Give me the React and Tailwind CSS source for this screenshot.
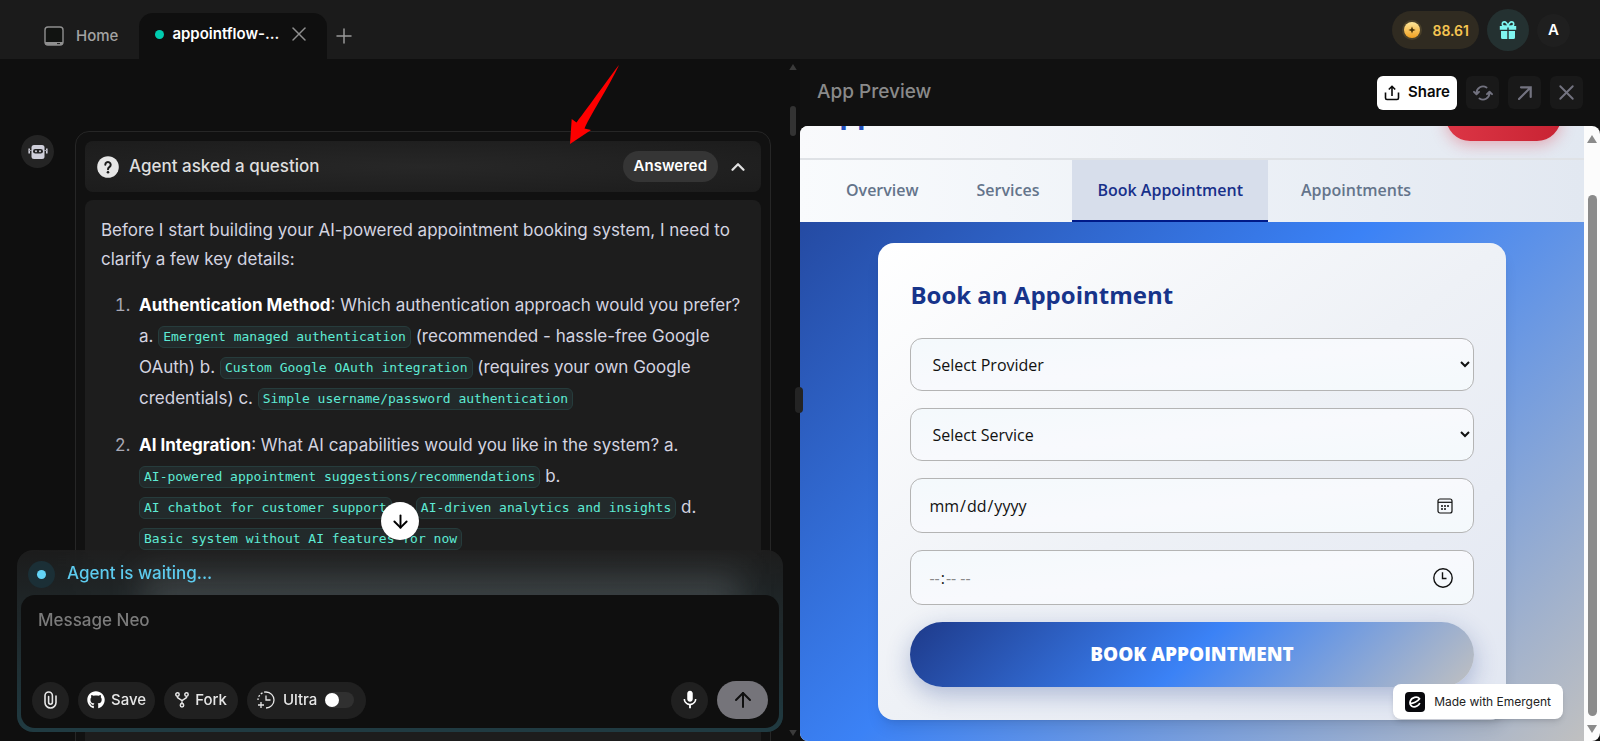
import React from 'react';
import { ArrowUp, ArrowDown, ChevronUp, Plus, X } from 'lucide-react';
import { FaGithub } from 'react-icons/fa';
import { MdMic } from 'react-icons/md';

const questions = [
  {
    title: 'Authentication Method',
    text: ': Which authentication approach would you prefer? a. ',
    options: [
      { label: 'Emergent managed authentication', after: ' (recommended - hassle-free Google OAuth) b. ' },
      { label: 'Custom Google OAuth integration', after: ' (requires your own Google credentials) c. ' },
      { label: 'Simple username/password authentication', after: '' },
    ],
  },
  {
    title: 'AI Integration',
    text: ': What AI capabilities would you like in the system? a. ',
    options: [
      { label: 'AI-powered appointment suggestions/recommendations', after: ' b. ' },
      { label: 'AI chatbot for customer support', after: ' c. ' },
      { label: 'AI-driven analytics and insights', after: ' d. ' },
      { label: 'Basic system without AI features for now', after: '' },
    ],
  },
];

const navTabs = ['Overview', 'Services', 'Book Appointment', 'Appointments'];

const HomeIcon = () => (
  <svg width="20" height="20" viewBox="0 0 20 20" fill="none">
    <rect x="1" y="1" width="18" height="18" rx="3" fill="#111311" stroke="#8f8f8f" strokeWidth="1.4" />
    <path d="M1 16h18v.5a2.5 2.5 0 0 1-2.500 2.500h-13A2.500 2.500 0 0 1 1 16.500z" fill="#8f8f8f" />
    <path d="M13 17.600h3" stroke="#1b1b1b" strokeWidth="1" />
  </svg>
);

const RobotIcon = () => (
  <svg width="20" height="14" viewBox="0 0 20 14">
    <rect x="3.500" y="0" width="13" height="14" rx="2.500" fill="#cfcfda" />
    <path d="M1.200 3.500v5M18.800 3.500v5" stroke="#cfcfda" strokeWidth="1.600" />
    <path d="M1 5.500h3M16 5.500h3" stroke="#9b9ba5" strokeWidth="1" />
    <rect x="5" y="4" width="10" height="4.600" rx="2.300" fill="#242424" />
    <circle cx="8" cy="6.300" r="1" fill="#cfcfda" />
    <circle cx="12" cy="6.300" r="1" fill="#cfcfda" />
  </svg>
);

const QuestionIcon = () => (
  <svg width="22" height="22" viewBox="0 0 22 22" fill="none">
    <circle cx="11" cy="11" r="10.800" fill="#e6e6e6" />
    <path d="M8.300 8.700a2.700 2.700 0 1 1 4.300 2.200c-1 .7-1.600 1.100-1.600 2.300" stroke="#1c1c1c" strokeWidth="2" strokeLinecap="round" />
    <circle cx="11" cy="16.200" r="1.300" fill="#1c1c1c" />
  </svg>
);

const CoinIcon = () => (
  <svg width="20" height="20" viewBox="0 0 20 20">
    <defs>
      <linearGradient id="coin" x1="0" y1="0" x2="0" y2="1">
        <stop offset="0" stopColor="#ffe79a" />
        <stop offset="1" stopColor="#f0a020" />
      </linearGradient>
    </defs>
    <circle cx="10" cy="10" r="10" fill="#4a4029" />
    <circle cx="10" cy="10" r="8" fill="url(#coin)" />
    <path d="M10 6.400 11 9l2.600 1-2.600 1-1 2.600L9 11l-2.600-1L9 9z" fill="#4a3408" />
  </svg>
);

const GiftIcon = () => (
  <svg width="18" height="18" viewBox="0 0 18 18" fill="none">
    <path d="M9 5.200C8 2 6.900.9 5.400.9a2.100 2.100 0 0 0 0 4.200zM9 5.200C10 2 11.100.9 12.600.9a2.100 2.100 0 0 1 0 4.200z" stroke="#7ff5f0" strokeWidth="1.600" />
    <path d="M.8 5h16.400v3.800H9.700V6.500H8.300v2.300H.8zM2 9.900h6.300V18H3.500A1.500 1.500 0 0 1 2 16.500zM9.700 9.900H16v6.600a1.500 1.500 0 0 1-1.500 1.500H9.700z" fill="#7ff5f0" />
  </svg>
);

const ShareIcon = () => (
  <svg width="16" height="16" viewBox="0 0 16 16" fill="none" stroke="#0a0a0a" strokeWidth="1.600">
    <path d="M1.500 7.500V13a1.500 1.500 0 0 0 1.500 1.500h10a1.500 1.500 0 0 0 1.500-1.500V7.500" />
    <path d="M8 11V1.500M4.800 4.500 8 1.300l3.200 3.200" />
  </svg>
);

const RefreshIcon = () => (
  <svg width="20" height="16" viewBox="0 0 20 16" fill="none" stroke="#737380" strokeWidth="1.900" strokeLinecap="round" strokeLinejoin="round">
    <path d="M3.500 9V8A6.500 6.500 0 0 1 13.500 2.500M1 6.800 3.500 9.300 6 6.800" />
    <path d="M16.500 7V8A6.500 6.500 0 0 1 6.500 13.500M14 9.200 16.500 6.700 19 9.200" />
  </svg>
);

const OpenIcon = () => (
  <svg width="14" height="14" viewBox="0 0 14 14" fill="none" stroke="#737380" strokeWidth="2.200" strokeLinecap="round">
    <path d="M1 13 12.500 1.500M3 1.300h9.700V11" />
  </svg>
);

const ClipIcon = () => (
  <svg width="13" height="18" viewBox="0 0 13 18" fill="none" stroke="#e6e6e6" strokeWidth="1.600" strokeLinecap="round">
    <path d="M12 5v6.500a5.500 5.500 0 0 1-11 0V4.700a3.700 3.700 0 0 1 7.400 0v6.600a1.900 1.900 0 0 1-3.800 0V5.500" />
  </svg>
);

const ForkIcon = () => (
  <svg width="14" height="16" viewBox="0 0 14 16" fill="none" stroke="#e6e6e6" strokeWidth="1.500">
    <circle cx="2.500" cy="2.500" r="1.700" />
    <circle cx="11.500" cy="2.500" r="1.700" />
    <circle cx="7" cy="13.300" r="1.700" />
    <path d="M2.500 4.200V5.500L7 8.500l4.500-3V4.200M7 8.500v3" />
  </svg>
);

const UltraIcon = () => (
  <svg width="18" height="18" viewBox="0 0 18 18" fill="none" stroke="#e6e6e6" strokeWidth="1.300">
    <path d="M9 1a8 8 0 0 1 0 16" />
    <path d="M9 1a8 8 0 0 0-8 8" strokeDasharray="2 1.600" />
    <path d="M9 4.500V9h4.500M4 11v6M1 14h6" />
  </svg>
);

const CalendarIcon = () => (
  <svg width="16" height="16" viewBox="0 0 16 16" fill="none">
    <rect x="1" y="1" width="14" height="14" rx="2" stroke="#111" strokeWidth="1.200" />
    <path d="M1 4.300h14" stroke="#111" strokeWidth="1.200" />
    <path d="M4 8h2M7 8h2M10 8h2M4 11h2M7 11h2" stroke="#111" strokeWidth="1.600" />
  </svg>
);

const ClockIcon = () => (
  <svg width="20" height="20" viewBox="0 0 20 20" fill="none" stroke="#111" strokeWidth="1.400">
    <circle cx="10" cy="10" r="9.200" />
    <path d="M9.500 4.200V10.500H13.500" />
  </svg>
);

const EmergentLogo = () => (
  <svg width="20" height="20" viewBox="0 0 20 20" fill="none">
    <rect width="20" height="20" rx="4" fill="#08080c" />
    <path d="M5 11.500C8 11.600 12.500 9.800 14.500 6.800 12.500 3.800 6.500 5 5.200 9.300 4 14 8.500 16 12 14c1.500-.8 2.400-1.800 2.800-3" stroke="#fff" strokeWidth="1.700" />
  </svg>
);

const Caret = ({ down, small }) => (
  <svg width={small ? 8 : 10} height={small ? 6 : 8} viewBox="0 0 10 8" className={small ? 'text-[#3a3a3a]' : 'text-[#8b8b8b]'}>
    <path d={down ? 'M0 0h10L5 8z' : 'M0 8h10L5 0z'} fill="currentColor" />
  </svg>
);

const TopBar = () => (
  <header className="flex h-[59px] shrink-0 items-end justify-between bg-[#1b1b1b] pr-[30px]">
    <div className="flex h-[46px] items-stretch">
      <button className="flex items-center gap-3 pr-[21px] pl-11 text-[15px] font-medium text-[#a3a3a3]">
        <HomeIcon />
        Home
      </button>
      <div className="flex w-[188px] items-center gap-2 rounded-t-[14px] bg-[#0f0f0f] pr-[18px] pb-1 pl-4">
        <span className="size-[9px] shrink-0 rounded-full bg-[#00ccaf]" />
        <span className="grow text-[15px] font-semibold text-white">appointflow-...</span>
        <button aria-label="Close tab"><X size={24} strokeWidth={1.5} className="text-[#8f8f8f]" /></button>
      </div>
      <button aria-label="New tab" className="px-[5px]"><Plus size={24} strokeWidth={1.5} className="text-[#999]" /></button>
    </div>
    <div className="mb-2 flex items-center gap-2">
      <button className="flex h-[38px] items-center gap-[10px] rounded-full bg-[#302b21] px-[10px] text-[14px] font-semibold text-[#f5c451]">
        <CoinIcon />
        88.61
      </button>
      <button aria-label="Rewards" className="flex size-[42px] items-center justify-center rounded-full bg-[#243131]"><GiftIcon /></button>
      <button className="size-[33px] rounded-full bg-[#1f1f1f] text-[15px] font-semibold text-white">A</button>
    </div>
  </header>
);

const Question = ({ title, text, options }) => (
  <li className="mt-4 pl-1 marker:text-[#a9a9b5]">
    <strong className="font-bold text-white">{title}</strong>{text}
    {options.map(opt => (
      <React.Fragment key={opt.label}>
        <code className="inline-block h-[22px] rounded-md border border-[#263c3c] bg-[#222a2b] px-1 align-middle font-['DejaVu_Sans_Mono',monospace] text-[13px] leading-[20px] text-[#5eead4]">{opt.label}</code>{opt.after}
      </React.Fragment>
    ))}
  </li>
);

const Composer = () => (
  <div className="absolute inset-x-[17px] bottom-[9px] overflow-hidden rounded-2xl bg-linear-to-b from-[#202020]/80 to-[#203b42] px-1 pb-1 backdrop-blur-md">
    {/* light bleeding through from the content behind */}
    <div className="absolute top-6 right-11 left-32 h-12 bg-[#8a9299]/25 blur-lg" />
    <div className="relative flex h-[45px] items-center gap-3 pt-[3px] pl-[7px] text-[17px] font-medium text-[#5dcbee]">
      <span className="flex size-[27px] items-center justify-center rounded-full bg-[#1b2f36]">
        <span className="size-[9px] rounded-full bg-[#63d4f7]" />
      </span>
      Agent is waiting...
    </div>
    <div className="relative rounded-[14px] bg-[#0f0f0f] px-[11px] pt-[13px] pb-[9px]">
      <textarea aria-label="Message Neo" placeholder="Message Neo" className="block h-[73px] w-full resize-none px-[6px] text-[17px] font-medium text-white outline-none placeholder:text-[#7b7b7b]" />
      <div className="flex items-center gap-[9px] text-[15px] font-medium text-[#e6e6e6]">
        <button aria-label="Attach file" className="flex size-[37px] items-center justify-center rounded-full bg-[#202020]"><ClipIcon /></button>
        <button className="flex h-[37px] items-center gap-[6px] rounded-full bg-[#202020] px-[9px]"><FaGithub size={18} className="text-white" />Save</button>
        <button className="flex h-[37px] items-center gap-[6px] rounded-full bg-[#202020] px-[11px]"><ForkIcon />Fork</button>
        <label className="flex h-[37px] items-center gap-2 rounded-full bg-[#202020] pr-3 pl-[10px]">
          <UltraIcon />
          Ultra
          <input type="checkbox" className="peer sr-only" />
          <span className="flex h-4 w-[29px] items-center rounded-full bg-[#303030] peer-checked:justify-end">
            <span className="size-[14px] rounded-full bg-white" />
          </span>
        </label>
        <button aria-label="Dictate" className="ml-auto flex size-[37px] items-center justify-center rounded-full bg-[#202020]"><MdMic size={22} className="text-white" /></button>
        <button aria-label="Send" className="flex h-[38px] w-[51px] items-center justify-center rounded-full bg-[#75747a]"><ArrowUp size={24} className="text-[#0f0f0f]" /></button>
      </div>
    </div>
  </div>
);

const ChatPanel = () => (
  <section className="relative w-1/2 overflow-hidden bg-[#0f0f0f]">
    <div className="flex h-full items-start pt-[72px] pr-[29px] pl-[21px]">
      <div className="mt-1 mr-[21px] flex size-[33px] shrink-0 items-center justify-center rounded-full bg-[#242424]"><RobotIcon /></div>
      <div className="min-h-full grow rounded-[14px] border border-[#262626] bg-[#111] p-[9px]">
        <div className="flex h-[51px] items-center rounded-lg bg-radial from-[#272727] to-[#1c1c1c] px-3">
          <QuestionIcon />
          <h2 className="ml-[10px] grow text-[17px] font-medium text-[#dedede]">Agent asked a question</h2>
          <span className="rounded-full bg-[#353535] px-[11px] py-1 text-[15px] font-semibold text-white">Answered</span>
          <button aria-label="Collapse" className="ml-[9px]"><ChevronUp size={22} strokeWidth={2.5} className="text-[#e0e0e0]" /></button>
        </div>
        <div className="mt-2 min-h-[600px] rounded-lg bg-[#1d1d1d] p-4 text-[17px] text-[#d4d4e0]">
          <p className="leading-[29px]">Before I start building your AI-powered appointment booking system, I need to clarify a few key details:</p>
          <ol className="list-decimal pl-[34px] leading-[31px]">
            {questions.map(q => <Question key={q.title} {...q} />)}
          </ol>
        </div>
      </div>
    </div>

    <div className="absolute inset-y-0 right-[3px] flex flex-col items-center pt-[5px] pb-[5px]">
      <Caret small />
      <div className="mt-[36px] mb-auto h-[30px] w-[6px] rounded-full bg-[#333]" />
      <Caret small down />
    </div>

    <Composer />
    <button aria-label="Scroll to bottom" className="absolute bottom-[201px] left-1/2 flex size-[38px] -translate-x-1/2 items-center justify-center rounded-full bg-white"><ArrowDown size={21} strokeWidth={2.2} className="text-black" /></button>
  </section>
);

const fieldClass = 'block w-full rounded-xl border border-[#b4b4b4] bg-linear-to-br from-[#f4f9fc] via-[#f8f9fd] to-[#f4f9fc] text-[16px] text-[#111] outline-none';

const BookingForm = () => (
  <form className="mx-auto w-4/5 rounded-2xl bg-linear-to-br from-white via-[#eef1f6] to-[#e2e7f2] px-8 py-[33px] shadow-lg" onSubmit={e => e.preventDefault()}>
    <h2 className="text-[24px] leading-[38px] font-bold text-[#17348a]">Book an Appointment</h2>
    <div className="mt-6 flex flex-col gap-[17px]">
      <select aria-label="Provider" className={`${fieldClass} h-[53px] px-[17px]`}>
        <option>Select Provider</option>
      </select>
      <select aria-label="Service" className={`${fieldClass} h-[53px] px-[17px]`}>
        <option>Select Service</option>
      </select>
      <div className="relative">
        <input type="date" aria-label="Date" className={`${fieldClass} h-[55px] px-[17px] [&::-webkit-calendar-picker-indicator]:opacity-0`} />
        <span className="pointer-events-none absolute inset-y-0 right-[21px] flex items-center"><CalendarIcon /></span>
      </div>
      <div className="relative">
        <input type="time" aria-label="Time" className={`${fieldClass} h-[55px] px-[17px] [&::-webkit-calendar-picker-indicator]:opacity-0 [&::-webkit-datetime-edit-ampm-field]:text-[#8a8a8a] [&::-webkit-datetime-edit-hour-field]:text-[#8a8a8a] [&::-webkit-datetime-edit-minute-field]:text-[#8a8a8a]`} />
        <span className="pointer-events-none absolute inset-y-0 right-[21px] flex items-center"><ClockIcon /></span>
      </div>
      <button className="h-[65px] rounded-full bg-[linear-gradient(135deg,#1e3a8a_0%,#3b82f6_50%,#c0c0c0_100%)] text-[19px] font-extrabold text-white shadow-[0_8px_24px_rgba(30,58,138,0.3)]">BOOK APPOINTMENT</button>
    </div>
  </form>
);

const PreviewPanel = () => (
  <section className="flex min-w-0 flex-1 flex-col bg-[#111]">
    <div className="flex h-[67px] shrink-0 items-center gap-[9px] pr-[17px] pl-[17px]">
      <h1 className="grow text-[19px] font-medium text-[#8a8a8a]">App Preview</h1>
      <button className="flex h-[34px] items-center gap-2 rounded-md bg-white px-[7px] text-[15px] font-semibold text-[#0a0a0a]"><ShareIcon />Share</button>
      <button aria-label="Reload" className="flex size-[33px] items-center justify-center rounded-md bg-[#191919]"><RefreshIcon /></button>
      <button aria-label="Open in new tab" className="flex size-[33px] items-center justify-center rounded-md bg-[#191919]"><OpenIcon /></button>
      <button aria-label="Close preview" className="flex size-[33px] items-center justify-center rounded-md bg-[#191919]"><X size={25} strokeWidth={1.8} className="text-[#737380]" /></button>
    </div>

    <div className="relative flex min-h-0 flex-1 overflow-hidden rounded-lg bg-[#fcfcfc] font-['Open_Sans',sans-serif]">
      <div className="flex min-w-0 flex-1 flex-col">
        {/* app header, scrolled almost out of view */}
        <div className="flex h-8 shrink-0 items-end justify-between overflow-hidden bg-linear-to-r from-[#f9fafc] to-[#e2e8f1] pr-[23px] pb-[17px] pl-5">
          <span className="mb-3 text-[28px] leading-[34px] font-bold text-[#2450bd]">App</span>
          <span className="h-12 w-[115px] shrink-0 rounded-full bg-linear-to-r from-[#dc3545] to-[#c82333] shadow-[0_4px_15px_rgba(220,53,69,0.35)]" />
        </div>
        <nav className="flex h-[64px] shrink-0 gap-2 border-t-2 border-[#dfe2e6] bg-linear-to-r from-[#f9fbfd] to-[#e2e8f1] pl-[21px] text-[16px] font-semibold">
          {navTabs.map(tab => (
            <button
              key={tab}
              className={`border-b-2 px-[25px] ${tab === 'Book Appointment' ? 'border-[#001a88] bg-[#d7deeb] text-[#17308a]' : 'border-transparent text-[#64748b]'}`}
            >{tab}</button>
          ))}
        </nav>
        <main className="flex-1 bg-[linear-gradient(135deg,#1e3a8a_-13%,#3b82f6_44%,#c0c0c0_100%)] pt-[21px]">
          <BookingForm />
        </main>
      </div>

      <div className="flex w-4 shrink-0 flex-col items-center pt-[9px] pb-2">
        <Caret />
        <div className="mt-[52px] mb-[9px] w-[9px] grow rounded-full bg-[#8b8b8b]" />
        <Caret down />
      </div>

      <a href="#emergent" className="absolute right-[37px] bottom-[22px] flex h-[35px] items-center gap-[9px] rounded-lg bg-white px-3 font-['Inter',sans-serif] text-[12px] text-[#222] shadow-md">
        <EmergentLogo />
        Made with Emergent
      </a>
    </div>
  </section>
);

const App = () => (
  <div className="relative flex h-screen flex-col overflow-hidden bg-[#0f0f0f] font-['Inter',sans-serif]">
    <TopBar />
    <div className="relative flex min-h-0 flex-1">
      <ChatPanel />
      <PreviewPanel />
      <div className="absolute top-1/2 left-1/2 h-[26px] w-2 -translate-x-[5px] -translate-y-[13px] rounded-full bg-[#242424]" />
    </div>
    <svg className="pointer-events-none absolute top-[65px] left-[570px]" width="50" height="80" viewBox="0 0 50 80">
      <path d="M49 0C41 10 20 40 6.500 57.500L1.700 54 0 79 21 65l-6.500-1.500C22 47 40 20 49 0z" fill="#fe0000" />
    </svg>
  </div>
);

export default App;
